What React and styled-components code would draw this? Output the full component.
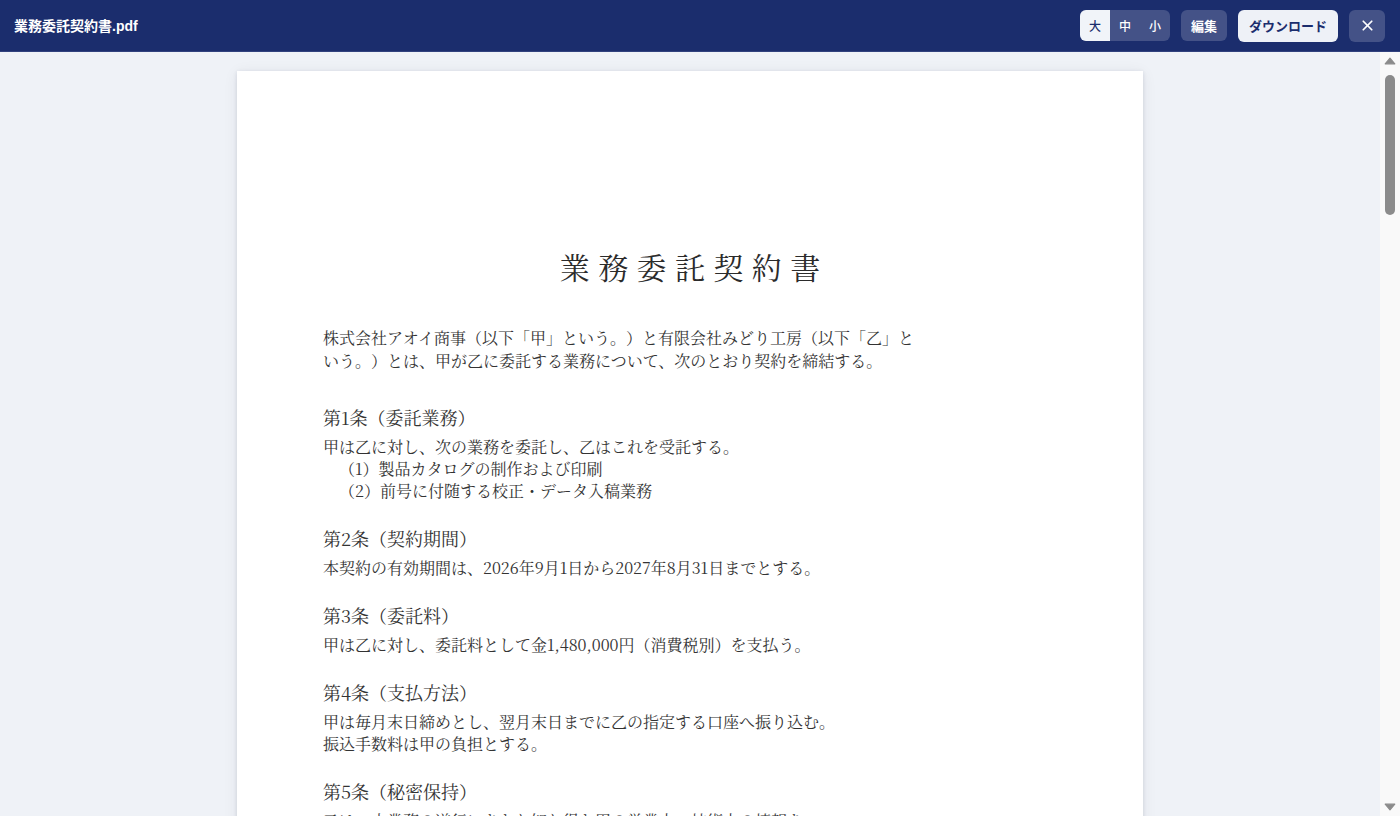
import React, { useState, useRef, useLayoutEffect } from 'react'
import styled, { createGlobalStyle } from 'styled-components'
import { X } from 'lucide-react'

const sizes = ['大', '中', '小']

const articles = [
  {
    title: '第1条（委託業務）',
    lines: ['甲は乙に対し、次の業務を委託し、乙はこれを受託する。'],
    items: ['（1）製品カタログの制作および印刷', '（2）前号に付随する校正・データ入稿業務'],
  },
  {
    title: '第2条（契約期間）',
    lines: ['本契約の有効期間は、2026年9月1日から2027年8月31日までとする。'],
  },
  {
    title: '第3条（委託料）',
    lines: ['甲は乙に対し、委託料として金1,480,000円（消費税別）を支払う。'],
  },
  {
    title: '第4条（支払方法）',
    lines: ['甲は毎月末日締めとし、翌月末日までに乙の指定する口座へ振り込む。', '振込手数料は甲の負担とする。'],
  },
  {
    title: '第5条（秘密保持）',
    lines: ['乙は、本業務の遂行にあたり知り得た甲の営業上・技術上の情報を', '第三者に開示または漏洩してはならない。'],
  },
]

const page2 = [
  {
    title: '第6条（再委託の禁止）',
    lines: ['乙は、甲の事前の書面による承諾を得ることなく、本業務の全部または一部を第三者に再委託してはならない。'],
  },
  {
    title: '第7条（成果物の権利）',
    lines: ['本業務により作成された成果物の著作権は、委託料の支払完了をもって乙から甲に移転するものとする。'],
  },
  {
    title: '第8条（契約の解除）',
    lines: ['甲または乙は、相手方が本契約に違反し、相当の期間を定めて催告したにもかかわらず是正されないときは、本契約を解除することができる。'],
  },
  {
    title: '第9条（損害賠償）',
    lines: ['甲または乙は、本契約に違反して相手方に損害を与えたときは、その損害を賠償する責任を負う。'],
  },
  {
    title: '第10条（協議事項）',
    lines: ['本契約に定めのない事項または本契約の解釈に疑義が生じた事項については、甲乙誠実に協議のうえ解決する。'],
  },
]

const Viewer = () => {
  const [size, setSize] = useState('大')
  const [thumb, setThumb] = useState({ top: 0, height: 140 })
  const scrollRef = useRef(null)
  const trackRef = useRef(null)

  // custom scrollbar: keep the thumb in step with the page list
  const syncThumb = () => {
    const el = scrollRef.current
    const track = trackRef.current
    if (!el || !track) return
    const room = track.clientHeight - 8
    const height = Math.max(24, (room * el.clientHeight) / el.scrollHeight)
    const max = el.scrollHeight - el.clientHeight
    const top = max > 0 ? ((room - height) * el.scrollTop) / max : 0
    setThumb({ top, height })
  }

  useLayoutEffect(() => {
    syncThumb()
    window.addEventListener('resize', syncThumb)
    return () => window.removeEventListener('resize', syncThumb)
  }, [])

  const step = (d) => scrollRef.current && scrollRef.current.scrollBy({ top: d })

  return (
    <Wrapper>
      <GlobalStyle />
      <TopBar>
        <FileName>業務委託契約書.pdf</FileName>
        <Actions>
          <SizeGroup>
            {sizes.map((s) => (
              <SizeButton key={s} $active={size === s} onClick={() => setSize(s)}>
                {s}
              </SizeButton>
            ))}
          </SizeGroup>
          <BarButton>編集</BarButton>
          <BarButton $primary>ダウンロード</BarButton>
          <CloseButton aria-label="閉じる">
            <X size={17} strokeWidth={2.4} />
          </CloseButton>
        </Actions>
      </TopBar>
      <Content>
        <Scroller ref={scrollRef} onScroll={syncThumb}>
          <Sheet $first>
            <DocTitle>業務委託契約書</DocTitle>
            <Intro>
              株式会社アオイ商事（以下「甲」という。）と有限会社みどり工房（以下「乙」という。）とは、甲が乙に委託する業務について、次のとおり契約を締結する。
            </Intro>
            {articles.map((a) => (
              <Article key={a.title}>
                <ArticleTitle>{a.title}</ArticleTitle>
                {a.lines.map((l) => (
                  <Body key={l}>{l}</Body>
                ))}
                {a.items && a.items.map((i) => <Item key={i}>{i}</Item>)}
              </Article>
            ))}
          </Sheet>
          <Sheet>
            {page2.map((a) => (
              <Article key={a.title}>
                <ArticleTitle>{a.title}</ArticleTitle>
                {a.lines.map((l) => (
                  <Body key={l}>{l}</Body>
                ))}
              </Article>
            ))}
          </Sheet>
          <Sheet>
            <Body>本契約締結の証として、本書2通を作成し、甲乙記名押印のうえ各1通を保有する。</Body>
            <Signature>
              <Body>2026年8月20日</Body>
              <Body>甲　東京都港区芝五丁目3番8号　株式会社アオイ商事</Body>
              <Body>乙　東京都世田谷区用賀二丁目14番1号　有限会社みどり工房</Body>
            </Signature>
          </Sheet>
        </Scroller>
        <Rail>
          <RailArrow onClick={() => step(-40)} aria-label="上へ">
            <svg width="12" height="8" viewBox="0 0 12 8">
              <path d="M6 1.2 L10.8 6.8 L1.2 6.8 Z" fill="#8b8b8b" stroke="#8b8b8b" strokeWidth="1.2" strokeLinejoin="round" />
            </svg>
          </RailArrow>
          <Track ref={trackRef}>
            <Thumb style={{ marginTop: thumb.top, height: thumb.height }} />
          </Track>
          <RailArrow onClick={() => step(40)} aria-label="下へ">
            <svg width="12" height="8" viewBox="0 0 12 8">
              <path d="M6 6.8 L10.8 1.2 L1.2 1.2 Z" fill="#8b8b8b" stroke="#8b8b8b" strokeWidth="1.2" strokeLinejoin="round" />
            </svg>
          </RailArrow>
        </Rail>
      </Content>
    </Wrapper>
  )
}

export default Viewer

const GlobalStyle = createGlobalStyle`
  html, body {
    margin: 0;
    height: 100%;
  }
  body {
    font-family: "Liberation Sans", "Noto Sans CJK JP", sans-serif;
  }
`

const Wrapper = styled.div`
  height: 100vh;
  display: flex;
  flex-direction: column;
  background: #eff2f7;
`

const TopBar = styled.header`
  height: 52px;
  flex-shrink: 0;
  box-sizing: border-box;
  padding: 0 15px 0 14px;
  display: flex;
  align-items: center;
  justify-content: space-between;
  background: #1b2d6d;
  border-bottom: 1px solid #31427e;
`

const FileName = styled.div`
  color: #ffffff;
  font-size: 14px;
  font-weight: 700;
  margin-top: -2px;
`

const Actions = styled.div`
  display: flex;
  align-items: center;
  gap: 11px;
`

const SizeGroup = styled.div`
  display: flex;
  height: 31px;
  border-radius: 6px;
  overflow: hidden;
  background: rgba(255, 255, 255, 0.18);
`

const SizeButton = styled.button`
  width: 30px;
  border: none;
  padding: 0;
  font-family: inherit;
  font-size: 12px;
  font-weight: 500;
  cursor: pointer;
  color: ${(p) => (p.$active ? '#1b2d6d' : '#ffffff')};
  background: ${(p) => (p.$active ? '#f1f4f9' : 'transparent')};
`

const BarButton = styled.button`
  height: ${(p) => (p.$primary ? '32px' : '31px')};
  padding: 0 ${(p) => (p.$primary ? '11px' : '10px')};
  border: none;
  border-radius: 6px;
  font-family: inherit;
  font-size: 13px;
  font-weight: 700;
  cursor: pointer;
  color: ${(p) => (p.$primary ? '#1b2d6d' : '#ffffff')};
  background: ${(p) => (p.$primary ? '#eef1f7' : 'rgba(255, 255, 255, 0.18)')};
`

const CloseButton = styled.button`
  width: 36px;
  height: 32px;
  border: none;
  border-radius: 6px;
  display: grid;
  place-items: center;
  color: #ffffff;
  cursor: pointer;
  background: rgba(255, 255, 255, 0.18);
`

const Content = styled.div`
  flex: 1;
  min-height: 0;
  display: flex;
`

const Scroller = styled.main`
  flex: 1;
  overflow-y: auto;
  scrollbar-width: none;
  padding: 19px 0;
  display: flex;
  flex-direction: column;
  align-items: center;
  gap: 19px;

  &::-webkit-scrollbar {
    display: none;
  }
`

const Rail = styled.div`
  width: 20px;
  flex-shrink: 0;
  display: flex;
  flex-direction: column;
  background: #f9f9f9;
`

const RailArrow = styled.button`
  height: 18px;
  flex-shrink: 0;
  border: none;
  padding: 0;
  display: grid;
  place-items: center;
  background: transparent;
  cursor: pointer;
`

const Track = styled.div`
  flex: 1;
  padding: 5px 0 3px;
  display: flex;
  flex-direction: column;
  align-items: center;
`

const Thumb = styled.div`
  width: 10px;
  border-radius: 5px;
  background: #8b8b8b;
`

const Sheet = styled.section`
  width: 906px;
  height: 1281px;
  flex-shrink: 0;
  box-sizing: border-box;
  padding: ${(p) => (p.$first ? '175px' : '100px')} 86px 100px;
  background: #ffffff;
  box-shadow: 0 1px 4px rgba(20, 30, 60, 0.12), 0 2px 14px rgba(20, 30, 60, 0.07);
  color: #333333;
  font-family: "Noto Serif CJK JP", "Liberation Serif", "Noto Sans CJK JP", serif;
  text-spacing-trim: space-all;
`

const DocTitle = styled.h1`
  margin: 0 0 40px;
  text-align: center;
  font-size: 30px;
  line-height: 40px;
  font-weight: 400;
  letter-spacing: 0.28em;
  padding-left: 0.28em;
  color: #2b2b2b;
`

const Intro = styled.p`
  margin: 0 0 32px;
  max-width: 600px;
  font-size: 16px;
  line-height: 23px;
`

const Article = styled.div`
  max-width: 600px;
  & + & {
    margin-top: 23px;
  }
`

const ArticleTitle = styled.h2`
  margin: 0 0 6px;
  font-size: 18px;
  line-height: 26px;
  font-weight: 400;
`

const Body = styled.p`
  margin: 0;
  font-size: 16px;
  line-height: 22px;
`

const Item = styled(Body)`
  padding-left: 16px;
`

const Signature = styled.div`
  margin-top: 40px;
  display: flex;
  flex-direction: column;
  gap: 12px;
`
